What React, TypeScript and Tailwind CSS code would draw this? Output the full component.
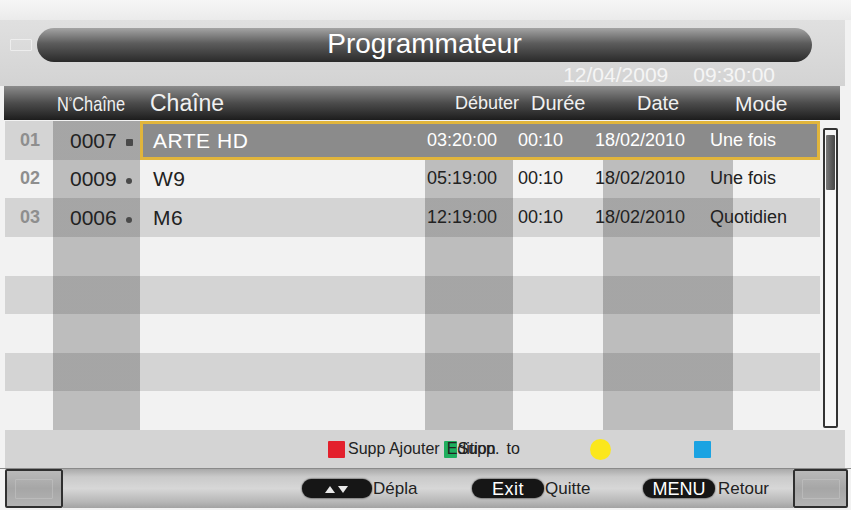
import React from "react"

type Row = {
  n: string
  ch: string
  name: string
  start: string
  dur: string
  date: string
  mode: string
}

const rows: Row[] = [
  { n: "01", ch: "0007", name: "ARTE HD", start: "03:20:00", dur: "00:10", date: "18/02/2010", mode: "Une fois" },
  { n: "02", ch: "0009", name: "W9", start: "05:19:00", dur: "00:10", date: "18/02/2010", mode: "Une fois" },
  { n: "03", ch: "0006", name: "M6", start: "12:19:00", dur: "00:10", date: "18/02/2010", mode: "Quotidien" },
  { n: "", ch: "", name: "", start: "", dur: "", date: "", mode: "" },
  { n: "", ch: "", name: "", start: "", dur: "", date: "", mode: "" },
  { n: "", ch: "", name: "", start: "", dur: "", date: "", mode: "" },
  { n: "", ch: "", name: "", start: "", dur: "", date: "", mode: "" },
  { n: "", ch: "", name: "", start: "", dur: "", date: "", mode: "" },
]

function Pill({ children, width }: { children: React.ReactNode; width: string }) {
  return (
    <div
      className={`${width} h-[19px] rounded-full bg-[#161616] flex items-center justify-center text-white text-[18px] leading-none shadow-[0_0_2px_#000]`}
    >
      {children}
    </div>
  )
}

function FooterBox() {
  return (
    <div className="h-full border-2 border-[#2f2f2f] rounded-[2px] bg-[linear-gradient(to_bottom,#b9b9b9,#a6a6a6_50%,#b3b3b3)] flex items-center justify-center">
      <div className="w-[38px] h-[20px] border border-[#c8c8c8]/50 rounded-[1px]" />
    </div>
  )
}

export default function App() {
  return (
    <div className="w-[851px] h-[510px] bg-[#f2f2f2] flex flex-col overflow-hidden font-['Liberation_Sans',Arial,sans-serif]">
      {/* top strip */}
      <div className="h-[20px] bg-[linear-gradient(to_bottom,#f6f6f6,#ebebeb)]" />

      {/* title area */}
      <div className="h-[66px] mr-[6px] bg-[linear-gradient(to_bottom,#e0e0e0,#d3d3d3)] flex flex-col">
        <div className="mt-[8px] h-[34px] flex items-center">
          <div className="ml-[10px] w-[22px] h-[12px] border border-white/50 rounded-[1px]" />
          <div className="ml-[5px] mr-[33px] flex-1 h-full rounded-full bg-[linear-gradient(to_bottom,#a4a4a4,#5c5c5c_45%,#2a2a2a)] flex items-center justify-center">
            <span className="text-white text-[28px] leading-none pb-[3px]">Programmateur</span>
          </div>
        </div>
        <div className="h-[24px] flex items-center justify-end pr-[70px] gap-[25px] text-[21px] leading-none text-[#f5f5f5]">
          <span>12/04/2009</span>
          <span>09:30:00</span>
        </div>
      </div>

      {/* header */}
      <div className="ml-[4px] w-[836px] h-[34px] bg-[linear-gradient(to_bottom,#8c8c8c,#4c4c4c_50%,#1d1d1d)] flex items-center text-[#f0f0f0] text-[20px] leading-none whitespace-nowrap">
        <div className="w-[53px]" />
        <div className="w-[93px]">
          <span className="inline-block origin-left scale-x-[0.78] text-[21px]">
            N<sup className="text-[11px]">°</sup>Chaîne
          </span>
        </div>
        <div className="w-[305px] text-[23px]">Chaîne</div>
        <div className="w-[76px] text-[18px]">Débuter</div>
        <div className="w-[106px]">Durée</div>
        <div className="w-[98px]">Date</div>
        <div className="flex-1 text-[21px]">Mode</div>
      </div>

      {/* table */}
      <div className="mt-[1px] ml-[5px] h-[309px] flex">
        <div className="w-[815px] flex flex-col">
          {rows.map((r, i) => {
            const selected = i === 0
            return (
              <div
                key={i}
                className={`flex-1 flex items-stretch whitespace-nowrap bg-[linear-gradient(to_right,transparent_48px,rgba(0,0,0,0.22)_48px,rgba(0,0,0,0.22)_135px,transparent_135px,transparent_420px,rgba(0,0,0,0.22)_420px,rgba(0,0,0,0.22)_508px,transparent_508px,transparent_598px,rgba(0,0,0,0.22)_598px,rgba(0,0,0,0.22)_728px,transparent_728px)] ${
                  i % 2 === 0 ? "bg-[#d4d4d4]" : "bg-[#f2f2f2]"
                }`}
              >
                <div className="w-[48px] pl-[15px] flex items-center text-[18px] font-bold text-[#8e8e8e]">{r.n}</div>
                <div className="w-[87px] pl-[17px] flex items-center text-[21px] text-[#222]">
                  {r.ch && (
                    <>
                      <span>{r.ch}</span>
                      <span
                        className={`ml-[9px] mt-[5px] bg-[#4a4a4a] ${
                          selected ? "w-[7px] h-[7px] rounded-[1px]" : "w-[6px] h-[6px] rounded-full"
                        }`}
                      />
                    </>
                  )}
                </div>
                <div
                  className={`flex-1 flex items-center text-[18px] ${
                    selected
                      ? "bg-[#8b8b8b] shadow-[inset_0_0_0_3px_#e1b53c] text-white"
                      : "text-[#222]"
                  }`}
                >
                  <div className="w-[285px] pl-[13px] text-[21px] tracking-[0.5px]">{r.name}</div>
                  <div className="w-[88px] pl-[2px]">{r.start}</div>
                  <div className="w-[82px] pl-[5px]">{r.dur}</div>
                  <div className="w-[115px]">{r.date}</div>
                  <div className="flex-1">{r.mode}</div>
                </div>
              </div>
            )
          })}
        </div>
        {/* scrollbar */}
        <div className="ml-[3px] mt-[7px] mb-[2px] w-[15px] border-2 border-[#333] rounded-[2px] bg-[#f7f7f7] flex flex-col">
          <div className="mt-[5px] mx-[1px] h-[55px] rounded-[1px] bg-[linear-gradient(to_right,#7a7a7a,#454545)]" />
        </div>
      </div>

      {/* colour keys */}
      <div className="ml-[5px] mr-[6px] h-[38px] bg-[#d4d4d4] flex items-center text-[16px] text-[#222] whitespace-nowrap">
        <div className="ml-[323px] w-[262px] flex items-center">
          <span className="w-[17px] h-[17px] bg-[#e3202c] rounded-[1px]" />
          <span className="ml-[3px]">Supp Ajouter</span>
          <span className="ml-[4px] relative inline-flex items-center">
            <span className="absolute left-0 w-[13px] h-[17px] bg-[#1fae5e] rounded-[1px]" />
            <span className="relative pl-[3px]">Edition</span>
            <span className="absolute left-[14px]">Supp.</span>
          </span>
          <span className="ml-[11px]">to</span>
        </div>
        <span className="w-[21px] h-[21px] rounded-full bg-[#fbe71c]" />
        <span className="ml-[83px] w-[17px] h-[17px] bg-[#1ba3e2] rounded-[1px]" />
      </div>

      {/* footer */}
      <div className="h-[40px] flex border-t border-[#8a8a8a]">
        <div className="ml-[5px] w-[58px]">
          <FooterBox />
        </div>
        <div className="flex-1 bg-[linear-gradient(to_bottom,#a9a9a9,#cacaca_20%,#d7d7d7_50%,#b6b6b6_85%,#a2a2a2)] flex items-center text-[17px] text-[#222] whitespace-nowrap">
          <div className="ml-[239px] w-[170px] flex items-center">
            <Pill width="w-[70px]">
              <svg width="26" height="10" viewBox="0 0 26 10">
                <path d="M1 9 L6 2 L11 9 Z" fill="#e8e8e8" />
                <path d="M14 2 L24 2 L19 9 Z" fill="#e8e8e8" />
              </svg>
            </Pill>
            <span className="ml-[1px]">Dépla</span>
          </div>
          <div className="w-[171px] flex items-center">
            <Pill width="w-[72px]">
              <span className="tracking-[0.5px]">Exit</span>
            </Pill>
            <span className="ml-[1px]">Quitte</span>
          </div>
          <div className="flex items-center">
            <Pill width="w-[72px]">MENU</Pill>
            <span className="ml-[3px]">Retour</span>
          </div>
        </div>
        <div className="w-[55px] mr-[3px]">
          <FooterBox />
        </div>
      </div>
    </div>
  )
}
